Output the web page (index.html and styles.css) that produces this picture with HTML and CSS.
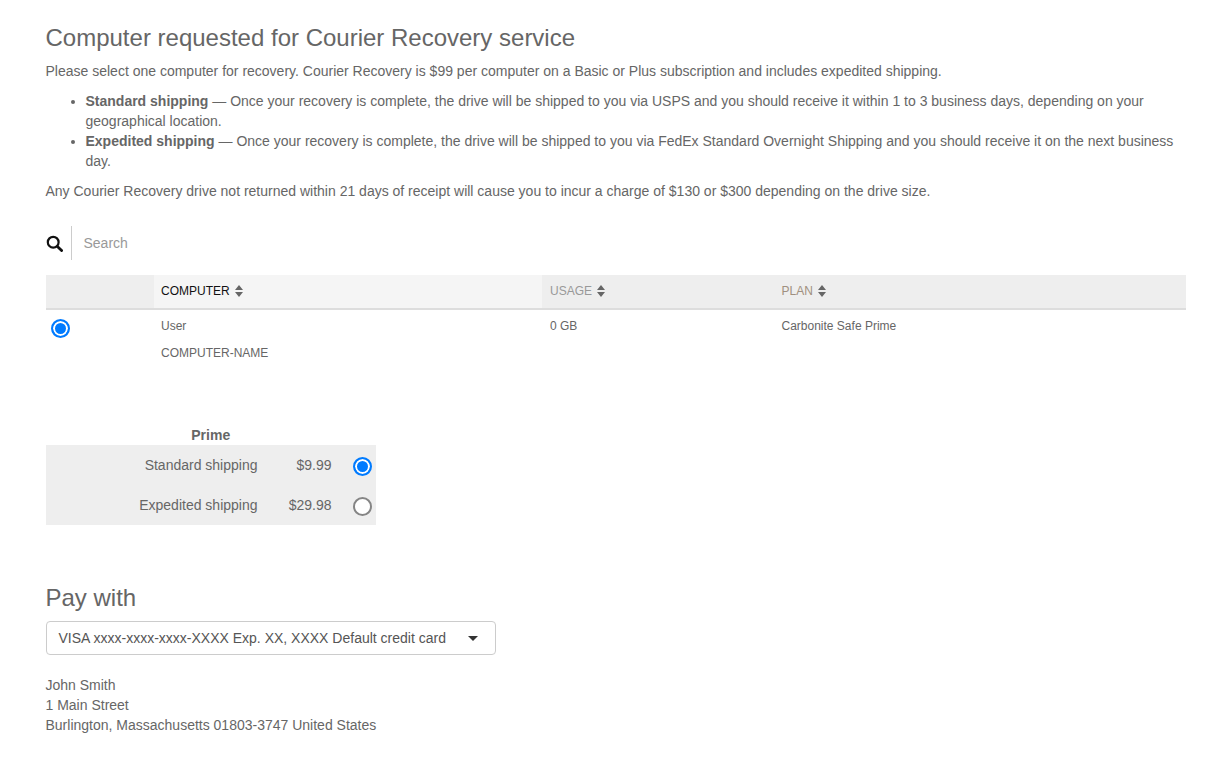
FILE: index.html
```html
<!DOCTYPE html>
<html lang="en">
<head>
<meta charset="utf-8">
<title>Courier Recovery</title>
<link rel="stylesheet" href="styles.css">
</head>
<body>
<main class="page">
  <h1 class="title">Computer requested for Courier Recovery service</h1>
  <p class="intro">Please select one computer for recovery. Courier Recovery is $99 per computer on a Basic or Plus subscription and includes expedited shipping.</p>
  <ul class="notes">
    <li><b>Standard shipping</b> — Once your recovery is complete, the drive will be shipped to you via USPS and you should receive it within 1 to 3 business days, depending on your geographical location.</li>
    <li><b>Expedited shipping</b> — Once your recovery is complete, the drive will be shipped to you via FedEx Standard Overnight Shipping and you should receive it on the next business day.</li>
  </ul>
  <p class="warning">Any Courier Recovery drive not returned within 21 days of receipt will cause you to incur a charge of $130 or $300 depending on the drive size.</p>

  <div class="search">
    <svg class="search-icon" width="17" height="17" viewBox="0 0 17 17"><circle cx="7.2" cy="7.2" r="5.4" fill="none" stroke="#111" stroke-width="2.2"/><path d="M11.4 11.4l4.2 4.2" stroke="#111" stroke-width="2.8" stroke-linecap="round"/></svg>
    <span class="search-text">Search</span>
  </div>

  <div class="table">
    <div class="thead">
      <div class="th th-select"></div>
      <div class="th th-active">COMPUTER <svg class="sort" width="8" height="12" viewBox="0 0 8 12"><path d="M4 0l4 5H0zM4 12L0 7h8z"/></svg></div>
      <div class="th th-usage">USAGE <svg class="sort" width="8" height="12" viewBox="0 0 8 12"><path d="M4 0l4 5H0zM4 12L0 7h8z"/></svg></div>
      <div class="th th-plan">PLAN <svg class="sort" width="8" height="12" viewBox="0 0 8 12"><path d="M4 0l4 5H0zM4 12L0 7h8z"/></svg></div>
    </div>
    <div class="tbody">
      <div class="td td-select"><span class="radio radio-on"></span></div>
      <div class="td td-name"><div class="cell-line">User</div><div class="cell-line">COMPUTER-NAME</div></div>
      <div class="td td-usage"><div class="cell-line">0 GB</div></div>
      <div class="td"><div class="cell-line">Carbonite Safe Prime</div></div>
    </div>
  </div>

  <div class="shipping">
    <div class="shipping-title">Prime</div>
    <div class="shipping-box">
      <div class="ship-row"><span class="ship-name">Standard shipping</span><span class="ship-price">$9.99</span><span class="radio radio-on"></span></div>
      <div class="ship-row"><span class="ship-name">Expedited shipping</span><span class="ship-price">$29.98</span><span class="radio"></span></div>
    </div>
  </div>

  <h2 class="pay-title">Pay with</h2>
  <div class="select">
    <span>VISA xxxx-xxxx-xxxx-XXXX Exp. XX, XXXX Default credit card</span>
    <span class="caret"></span>
  </div>
  <address class="address">John Smith<br>1 Main Street<br>Burlington, Massachusetts 01803-3747 United States</address>
</main>
</body>
</html>
```
FILE: styles.css
```css
* { box-sizing: border-box; }
html, body { margin: 0; padding: 0; background: #fff; }
body { font-family: "Liberation Sans", Arial, sans-serif; font-size: 14px; line-height: 20px; color: #666; }
.page { padding: 21px 41px 0 45.5px; }
.title { margin: 0 0 6px; font-size: 24px; line-height: 34px; font-weight: 400; color: #666; }
.intro { margin: 0 0 10px; }
.notes { margin: 0 0 10px; padding: 0 0 0 40px; }
.warning { margin: 0 0 25px; }
.search { display: flex; align-items: center; height: 34px; margin-bottom: 15px; }
.search-icon { flex: none; margin-right: 8.5px; }
.search-text { border-left: 1px solid #ccc; height: 34px; line-height: 34px; padding-left: 11.5px; color: #999; }
.table { width: 1140.5px; font-size: 12px; }
.thead, .tbody { display: grid; grid-template-columns: 108.5px 388px 232px 412px; }
.thead { border-bottom: 2px solid #ddd; background: #eee; height: 35px; }
.th { padding: 0 7.5px; line-height: 33px; color: #999; }
.th-active { background: #f5f5f5; color: #111; padding-left: 7px; }
.th-usage { padding-left: 8px; }
.th-plan { color: #a09080; }
.sort { vertical-align: -2px; margin-left: 2px; fill: #666; }
.tbody { height: 110px; }
.td { padding: 6px 7.5px; }
.td-select { padding: 9px 5.5px; }
.td-name { padding-left: 7px; }
.td-usage { padding-left: 8px; }
.cell-line { line-height: 20px; margin-bottom: 7px; color: #666; }
.radio { display: block; flex: none; width: 19px; height: 19px; border-radius: 50%; border: 2px solid #858585; background: #fff; }
.ship-row .radio { margin-top: 2px; }
.radio-on { border: 2px solid #007bff; box-shadow: inset 0 0 0 2px #fff; background: #007bff; }
.shipping { width: 330.5px; margin-top: 5px; }
.shipping-title { text-align: center; font-weight: 700; line-height: 20px; }
.shipping-box { background: #eee; height: 80px; }
.ship-row { display: flex; align-items: center; justify-content: flex-end; height: 40px; padding-right: 4px; }
.ship-price { width: 74px; text-align: right; margin-right: 21.5px; }
.pay-title { margin: 56px 0 6px; font-size: 24px; line-height: 34px; font-weight: 400; color: #666; }
.select { display: flex; justify-content: space-between; align-items: center; width: 450.5px; height: 34px; padding: 0 17.5px 0 12px; border: 1px solid #ccc; border-radius: 4px; color: #555; }
.caret { width: 0; height: 0; border-left: 5.5px solid transparent; border-right: 5.5px solid transparent; border-top: 5px solid #333; }
.address { margin-top: 20px; font-style: normal; }
```
